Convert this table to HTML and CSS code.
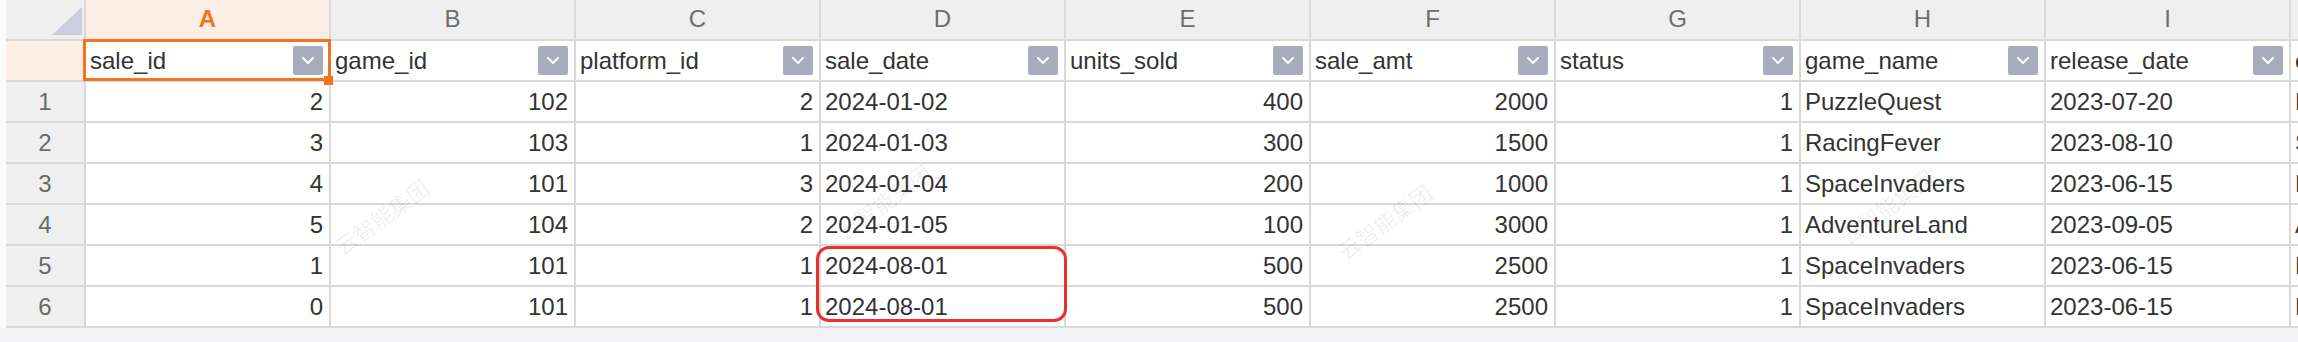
FILE: index.html
```html
<!DOCTYPE html>
<html>
<head>
<meta charset="utf-8">
<link rel="stylesheet" href="styles.css">
</head>
<body>
<div class="sheet">
  <div class="grid">
    <div class="c corner"><svg class="tri" width="80" height="41" viewBox="0 0 80 41"><polygon points="76,7 76,35 46,35" fill="#cbcedb"/></svg></div>
    <div class="c colh sel">A</div>
    <div class="c colh">B</div>
    <div class="c colh">C</div>
    <div class="c colh">D</div>
    <div class="c colh">E</div>
    <div class="c colh">F</div>
    <div class="c colh">G</div>
    <div class="c colh">H</div>
    <div class="c colh">I</div>
    <div class="c colh">J</div>

    <div class="c rowh selrow"></div>
    <div class="c fld active"><span>sale_id</span><i class="dd"></i><b class="handle"></b></div>
    <div class="c fld"><span>game_id</span><i class="dd"></i></div>
    <div class="c fld"><span>platform_id</span><i class="dd"></i></div>
    <div class="c fld"><span>sale_date</span><i class="dd"></i></div>
    <div class="c fld"><span>units_sold</span><i class="dd"></i></div>
    <div class="c fld"><span>sale_amt</span><i class="dd"></i></div>
    <div class="c fld"><span>status</span><i class="dd"></i></div>
    <div class="c fld"><span>game_name</span><i class="dd"></i></div>
    <div class="c fld"><span>release_date</span><i class="dd"></i></div>
    <div class="c fld"><span>category</span><i class="dd"></i></div>

    <div class="c rowh">1</div>
    <div class="c n">2</div><div class="c n">102</div><div class="c n">2</div><div class="c t">2024-01-02</div><div class="c n">400</div><div class="c n">2000</div><div class="c n">1</div><div class="c t">PuzzleQuest</div><div class="c t">2023-07-20</div><div class="c t">Puzzle</div>

    <div class="c rowh">2</div>
    <div class="c n">3</div><div class="c n">103</div><div class="c n">1</div><div class="c t">2024-01-03</div><div class="c n">300</div><div class="c n">1500</div><div class="c n">1</div><div class="c t">RacingFever</div><div class="c t">2023-08-10</div><div class="c t">Sports</div>

    <div class="c rowh">3</div>
    <div class="c n">4</div><div class="c n">101</div><div class="c n">3</div><div class="c t">2024-01-04</div><div class="c n">200</div><div class="c n">1000</div><div class="c n">1</div><div class="c t">SpaceInvaders</div><div class="c t">2023-06-15</div><div class="c t">Defense</div>

    <div class="c rowh">4</div>
    <div class="c n">5</div><div class="c n">104</div><div class="c n">2</div><div class="c t">2024-01-05</div><div class="c n">100</div><div class="c n">3000</div><div class="c n">1</div><div class="c t">AdventureLand</div><div class="c t">2023-09-05</div><div class="c t">Adventure</div>

    <div class="c rowh">5</div>
    <div class="c n">1</div><div class="c n">101</div><div class="c n">1</div><div class="c t">2024-08-01</div><div class="c n">500</div><div class="c n">2500</div><div class="c n">1</div><div class="c t">SpaceInvaders</div><div class="c t">2023-06-15</div><div class="c t">Defense</div>

    <div class="c rowh">6</div>
    <div class="c n">0</div><div class="c n">101</div><div class="c n">1</div><div class="c t">2024-08-01</div><div class="c n">500</div><div class="c n">2500</div><div class="c n">1</div><div class="c t">SpaceInvaders</div><div class="c t">2023-06-15</div><div class="c t">Defense</div>

    <div class="wm wm1">云智能集团</div>
    <div class="wm wm2">云智能集团</div>
    <div class="wm wm3">云智能集团</div>
    <div class="wm wm4">云智能集团</div>

    <div class="mark"></div>
  </div>
</div>
</body>
</html>
```
FILE: styles.css
```css
html, body {
  margin: 0;
  padding: 0;
}
body {
  width: 2298px;
  height: 342px;
  overflow: hidden;
  background: #f3f3f5;
  font-family: "Liberation Sans", Arial, sans-serif;
  font-size: 24px;
  color: #333333;
}
.sheet {
  padding-left: 6px;
  background: #fbfbfb;
  width: 2292px;
  overflow: hidden;
}
.grid {
  position: relative;
  display: grid;
  grid-template-columns: 80px repeat(9, 245px) 200px;
  grid-auto-rows: 41px;
  width: 2485px;
}
.c {
  box-sizing: border-box;
  border-right: 2px solid #d9d9d9;
  border-bottom: 2px solid #d9d9d9;
  background: #ffffff;
  display: flex;
  align-items: center;
  white-space: nowrap;
  overflow: hidden;
  position: relative;
}
.corner {
  background: #efefef;
  overflow: visible;
}
.tri {
  position: absolute;
  left: 0;
  top: 0;
}
.colh {
  background: #efefef;
  color: #6e6e6e;
  justify-content: center;
  padding-bottom: 2px;
}
.colh.sel {
  background: #fdeee5;
  color: #f2731d;
  font-weight: bold;
}
.rowh {
  background: #efefef;
  color: #6a6a6a;
  justify-content: center;
}
.rowh.selrow {
  background: #fdeee5;
}
.fld {
  justify-content: space-between;
  padding-left: 4px;
  padding-right: 6px;
}
.fld.active {
  overflow: visible;
  z-index: 2;
}
.fld.active::after {
  content: "";
  position: absolute;
  top: -2px;
  left: -3px;
  right: -2px;
  bottom: -1px;
  border: 3px solid #f4731c;
  pointer-events: none;
}
.handle {
  position: absolute;
  right: -4px;
  bottom: -5px;
  width: 9px;
  height: 9px;
  background: #f4731c;
  z-index: 3;
}
.dd {
  flex: none;
  width: 30px;
  height: 29px;
  border-radius: 2px;
  background: #a9acbd url("data:image/svg+xml;utf8,<svg xmlns='http://www.w3.org/2000/svg' width='30' height='29'><polyline points='10,12 15,17 20,12' fill='none' stroke='white' stroke-width='2' stroke-linecap='round' stroke-linejoin='round'/></svg>") no-repeat center;
}
.n {
  justify-content: flex-end;
  padding-right: 6px;
}
.t {
  padding-left: 4px;
}
.wm {
  position: absolute;
  font-family: "Noto Sans CJK SC", sans-serif;
  font-size: 22px;
  color: rgba(0, 0, 0, 0.07);
  transform: rotate(-36deg);
  transform-origin: center;
  pointer-events: none;
  white-space: nowrap;
}
.wm1 { left: 320px; top: 200px; }
.wm2 { left: 822px; top: 185px; }
.wm3 { left: 1323px; top: 205px; }
.wm4 { left: 1825px; top: 190px; }
.mark {
  position: absolute;
  left: 810px;
  top: 246px;
  width: 251px;
  height: 76px;
  box-sizing: border-box;
  border: 3px solid #e8302c;
  border-radius: 13px;
  z-index: 4;
}
```
